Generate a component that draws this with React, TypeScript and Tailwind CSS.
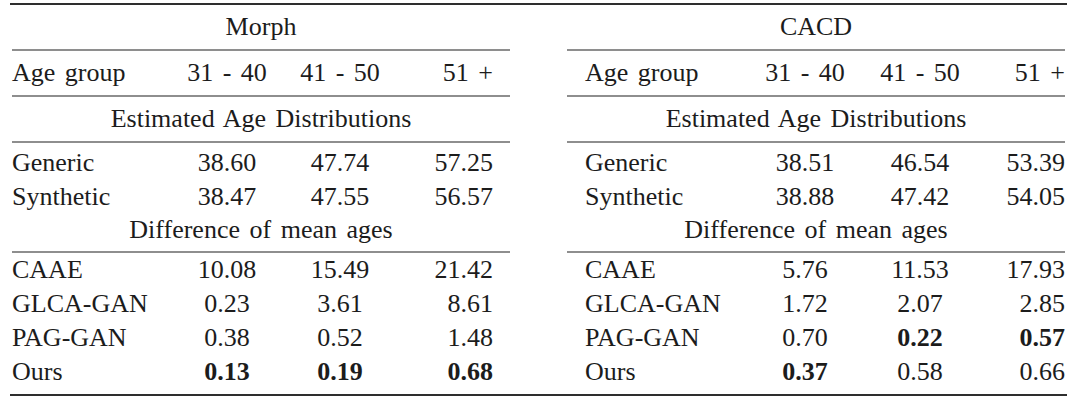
import React from 'react';

type Cell = { v: string; b?: boolean };
type Row = { label: string; cells: Cell[]; h: string };

interface HalfProps {
  title: string;
  ages: string[];
  dist: Row[];
  diff: Row[];
  grid: string;
  pad: string;
}

const c = (v: string, b = false): Cell => ({ v, b });

const DataRow = ({ row, grid, pad }: { row: Row; grid: string; pad: string }) => (
  <div className={`grid items-center ${grid} ${pad} ${row.h}`}>
    <span>{row.label}</span>
    {row.cells.map((cell, i) => (
      <span
        key={i}
        className={`${i === 2 ? 'text-right' : 'text-center'} ${cell.b ? 'font-bold' : ''}`}
      >
        {cell.v}
      </span>
    ))}
  </div>
);

const Rule = () => <div className="h-[2px] bg-[#8e8e8e]" />;

const Half: React.FC<HalfProps> = ({ title, ages, dist, diff, grid, pad }) => (
  <div className="flex w-[498px] flex-col">
    <div className="flex h-[44px] items-center justify-center">{title}</div>
    <Rule />
    <DataRow
      row={{ label: 'Age group', cells: ages.map((a) => c(a)), h: 'h-[44px]' }}
      grid={grid}
      pad={pad}
    />
    <Rule />
    <div className="flex h-[44px] items-center justify-center">Estimated Age Distributions</div>
    <Rule />
    <div className="pt-[3px]">
      {dist.map((r) => (
        <DataRow key={r.label} row={r} grid={grid} pad={pad} />
      ))}
      <div className="flex h-[33px] items-center justify-center">Difference of mean ages</div>
    </div>
    <div className="h-[5px]" />
    <Rule />
    <div>
      {diff.map((r) => (
        <DataRow key={r.label} row={r} grid={grid} pad={pad} />
      ))}
    </div>
  </div>
);

const ages = ['31 - 40', '41 - 50', '51 +'];

export default function App() {
  return (
    <div className="h-[411px] w-[1080px] overflow-hidden bg-white pl-[10px] font-['Liberation_Serif','Times_New_Roman',serif] text-[26px] leading-none text-[#1c1c1c] [word-spacing:3px]">
      <div className="mt-[3px] h-[2px] w-[1057px] bg-[#2e2e2e]" />
      <div className="flex gap-[57px] pl-[2px]">
        <Half
          title="Morph"
          ages={ages}
          grid="grid-cols-[160px_110px_116px_95px]"
          pad="pr-[17px]"
          dist={[
            { label: 'Generic', cells: [c('38.60'), c('47.74'), c('57.25')], h: 'h-[34px]' },
            { label: 'Synthetic', cells: [c('38.47'), c('47.55'), c('56.57')], h: 'h-[33px]' },
          ]}
          diff={[
            { label: 'CAAE', cells: [c('10.08'), c('15.49'), c('21.42')], h: 'h-[34px]' },
            { label: 'GLCA-GAN', cells: [c('0.23'), c('3.61'), c('8.61')], h: 'h-[33px]' },
            { label: 'PAG-GAN', cells: [c('0.38'), c('0.52'), c('1.48')], h: 'h-[35px]' },
            { label: 'Ours', cells: [c('0.13', true), c('0.19', true), c('0.68', true)], h: 'h-[33px]' },
          ]}
        />
        <Half
          title="CACD"
          ages={ages}
          grid="grid-cols-[165px_110px_120px_85px]"
          pad="pl-[18px]"
          dist={[
            { label: 'Generic', cells: [c('38.51'), c('46.54'), c('53.39')], h: 'h-[34px]' },
            { label: 'Synthetic', cells: [c('38.88'), c('47.42'), c('54.05')], h: 'h-[33px]' },
          ]}
          diff={[
            { label: 'CAAE', cells: [c('5.76'), c('11.53'), c('17.93')], h: 'h-[34px]' },
            { label: 'GLCA-GAN', cells: [c('1.72'), c('2.07'), c('2.85')], h: 'h-[33px]' },
            { label: 'PAG-GAN', cells: [c('0.70'), c('0.22', true), c('0.57', true)], h: 'h-[35px]' },
            { label: 'Ours', cells: [c('0.37', true), c('0.58'), c('0.66')], h: 'h-[33px]' },
          ]}
        />
      </div>
      <div className="mt-[6px] h-[2px] w-[1057px] bg-[#2e2e2e]" />
    </div>
  );
}
